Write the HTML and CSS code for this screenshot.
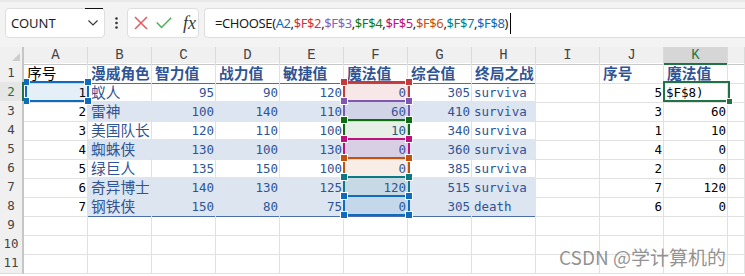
FILE: index.html
```html
<!DOCTYPE html>
<html lang="zh-CN">
<head>
  <meta charset="UTF-8">
  <title>CHOOSE</title>
  <link rel="stylesheet" href="styles.css">
</head>
<body>
  <!-- barra de fórmulas -->
  <div class="toolbar">
    <div class="namebox">
      <span>COUNT</span>
      <svg class="chev" width="10" height="6" viewBox="0 0 10 6"><polyline points="0.5,0.5 5,5 9.5,0.5" fill="none" stroke="#333" stroke-width="1.1"/></svg>
    </div>
    <div class="dots">
      <svg width="3" height="12" viewBox="0 0 3 12"><circle cx="1.5" cy="1.5" r="1.3" fill="#333"/><circle cx="1.5" cy="6" r="1.3" fill="#333"/><circle cx="1.5" cy="10.5" r="1.3" fill="#333"/></svg>
    </div>
    <div class="fxbox">
      <svg width="14" height="14" viewBox="0 0 14 14"><path d="M1 1 L13 13 M13 1 L1 13" stroke="#e8585c" stroke-width="1.5" fill="none"/></svg>
      <svg width="16" height="12" viewBox="0 0 16 12"><polyline points="0.8,5.5 5.5,10.5 15.2,0.8" stroke="#4caf58" stroke-width="1.5" fill="none"/></svg>
      <span class="fx">fx</span>
    </div>
    <div class="formula">
      <span>=CHOOSE(<b class="r1">A2</b>,<b class="r2">$F$2</b>,<b class="r3">$F$3</b>,<b class="r4">$F$4</b>,<b class="r5">$F$5</b>,<b class="r6">$F$6</b>,<b class="r7">$F$7</b>,<b class="r8">$F$8</b>)</span><span class="caret"></span>
    </div>
  </div>

  <!-- planilha -->
  <div class="sheet">
    <div class="row head">
      <div class="corner"></div>
      <div class="ch">A</div><div class="ch">B</div><div class="ch">C</div><div class="ch">D</div>
      <div class="ch">E</div><div class="ch">F</div><div class="ch">G</div><div class="ch">H</div>
      <div class="ch">I</div><div class="ch">J</div><div class="ch sel">K</div><div class="ch"></div>
    </div>
    <div class="row">
      <div class="rh">1</div>
      <div class="c">序号</div>
      <div class="c t hd">漫威角色</div><div class="c t hd">智力值</div><div class="c t hd">战力值</div>
      <div class="c t hd">敏捷值</div><div class="c t hd">魔法值</div><div class="c t hd">综合值</div>
      <div class="c t hd">终局之战</div>
      <div class="c"></div>
      <div class="c hd2">序号</div><div class="c hd2">魔法值</div><div class="c"></div>
    </div>
    <div class="row">
      <div class="rh sel">2</div>
      <div class="c n">1</div>
      <div class="c t">蚁人</div><div class="c t n">95</div><div class="c t n">90</div>
      <div class="c t n">120</div><div class="c t n">0</div><div class="c t n">305</div>
      <div class="c t m">surviva</div>
      <div class="c"></div>
      <div class="c n">5</div><div class="c m">$F$8)</div><div class="c"></div>
    </div>
    <div class="row">
      <div class="rh">3</div>
      <div class="c n">2</div>
      <div class="c t b">雷神</div><div class="c t b n">100</div><div class="c t b n">140</div>
      <div class="c t b n">110</div><div class="c t b n">60</div><div class="c t b n">410</div>
      <div class="c t b m">surviva</div>
      <div class="c"></div>
      <div class="c n">3</div><div class="c n">60</div><div class="c"></div>
    </div>
    <div class="row">
      <div class="rh">4</div>
      <div class="c n">3</div>
      <div class="c t">美国队长</div><div class="c t n">120</div><div class="c t n">110</div>
      <div class="c t n">100</div><div class="c t n">10</div><div class="c t n">340</div>
      <div class="c t m">surviva</div>
      <div class="c"></div>
      <div class="c n">1</div><div class="c n">10</div><div class="c"></div>
    </div>
    <div class="row">
      <div class="rh">5</div>
      <div class="c n">4</div>
      <div class="c t b">蜘蛛侠</div><div class="c t b n">130</div><div class="c t b n">100</div>
      <div class="c t b n">130</div><div class="c t b n">0</div><div class="c t b n">360</div>
      <div class="c t b m">surviva</div>
      <div class="c"></div>
      <div class="c n">4</div><div class="c n">0</div><div class="c"></div>
    </div>
    <div class="row">
      <div class="rh">6</div>
      <div class="c n">5</div>
      <div class="c t">绿巨人</div><div class="c t n">135</div><div class="c t n">150</div>
      <div class="c t n">100</div><div class="c t n">0</div><div class="c t n">385</div>
      <div class="c t m">surviva</div>
      <div class="c"></div>
      <div class="c n">2</div><div class="c n">0</div><div class="c"></div>
    </div>
    <div class="row">
      <div class="rh">7</div>
      <div class="c n">6</div>
      <div class="c t b">奇异博士</div><div class="c t b n">140</div><div class="c t b n">130</div>
      <div class="c t b n">125</div><div class="c t b n">120</div><div class="c t b n">515</div>
      <div class="c t b m">surviva</div>
      <div class="c"></div>
      <div class="c n">7</div><div class="c n">120</div><div class="c"></div>
    </div>
    <div class="row">
      <div class="rh">8</div>
      <div class="c n">7</div>
      <div class="c t b end">钢铁侠</div><div class="c t b end n">150</div><div class="c t b end n">80</div>
      <div class="c t b end n">75</div><div class="c t b end n">0</div><div class="c t b end n">305</div>
      <div class="c t b end m">death</div>
      <div class="c"></div>
      <div class="c n">6</div><div class="c n">0</div><div class="c"></div>
    </div>
    <div class="row">
      <div class="rh">9</div>
      <div class="c"></div><div class="c"></div><div class="c"></div><div class="c"></div><div class="c"></div><div class="c"></div>
      <div class="c"></div><div class="c"></div><div class="c"></div><div class="c"></div><div class="c"></div><div class="c"></div>
    </div>
    <div class="row">
      <div class="rh">10</div>
      <div class="c"></div><div class="c"></div><div class="c"></div><div class="c"></div><div class="c"></div><div class="c"></div>
      <div class="c"></div><div class="c"></div><div class="c"></div><div class="c"></div><div class="c"></div><div class="c"></div>
    </div>
    <div class="row">
      <div class="rh">11</div>
      <div class="c"></div><div class="c"></div><div class="c"></div><div class="c"></div><div class="c"></div><div class="c"></div>
      <div class="c"></div><div class="c"></div><div class="c"></div><div class="c"></div><div class="c"></div><div class="c"></div>
    </div>

    <!-- referências da fórmula -->
    <div class="ref ref-a2 c-blue"></div>
    <div class="ref ref-f f2 c-red"></div>
    <div class="ref ref-f f3 c-purple"></div>
    <div class="ref ref-f f4 c-green"></div>
    <div class="ref ref-f f5 c-magenta"></div>
    <div class="ref ref-f f6 c-orange"></div>
    <div class="ref ref-f f7 c-teal"></div>
    <div class="ref ref-f f8 c-blue"></div>
    <div class="active"></div>
  </div>

  <div class="watermark">CSDN @学计算机的</div>
</body>
</html>
```

FILE: styles.css
```css
/* Página */
body {
  margin: 0;
  width: 745px;
  height: 276px;
  overflow: hidden;
  position: relative;
  background-color: #fff;
  font-family: "Noto Sans", "Noto Sans CJK SC", sans-serif;
}

/* Barra de fórmulas */
.toolbar {
  height: 47px;
  box-sizing: border-box;
  padding: 6px 0 0 5px;
  display: flex;
  align-items: flex-start;
  background-color: #f3f3f3;
  border-top: 2px solid #e9e9e9;
}

.namebox {
  position: relative;
  width: 100px;
  height: 30px;
  box-sizing: border-box;
  display: flex;
  align-items: center;
  padding-left: 5px;
  background-color: #fff;
  border: 1px solid #dedede;
  border-radius: 4px;
  font-size: 13px;
  color: #1e1e1e;
}

.namebox::after {
  content: '';
  position: absolute;
  right: 1px;
  top: -1px;
  width: 18px;
  height: 1px;
  background-color: #111;
}

.chev {
  margin-left: auto;
  margin-right: 6px;
}

.dots {
  width: 22px;
  height: 30px;
  display: flex;
  align-items: center;
  justify-content: center;
}

.fxbox {
  width: 72px;
  height: 30px;
  box-sizing: border-box;
  display: flex;
  align-items: center;
  padding-left: 6px;
  gap: 8px;
  background-color: #fff;
  border: 1px solid #dedede;
  border-radius: 4px;
}

.fx {
  font-family: "Liberation Serif", serif;
  font-style: italic;
  font-size: 18px;
  color: #3a3a3a;
  margin-left: 3px;
  line-height: 1;
}

.formula {
  flex: 1;
  margin-left: 5px;
  height: 30px;
  box-sizing: border-box;
  display: flex;
  align-items: center;
  padding-left: 10px;
  background-color: #fff;
  border: 1px solid #dedede;
  border-right: none;
  border-radius: 4px 0 0 4px;
  font-size: 13px;
  letter-spacing: -0.4px;
  color: #1b1b1b;
}

.formula b { font-weight: normal; }
.r1, .r8 { color: #0f6cbd; }
.r2 { color: #d13438; }
.r3 { color: #8764b8; }
.r4 { color: #107c10; }
.r5 { color: #c30c82; }
.r6 { color: #ca5010; }
.r7 { color: #038387; }

.caret {
  width: 1px;
  height: 21px;
  margin-left: 2px;
  background-color: #000;
}

/* Planilha */
.sheet {
  position: relative;
}

.row {
  display: grid;
  grid-template-columns: 24px repeat(11, 64px) 1fr;
  height: 19px;
}

.row.head {
  height: 16px;
  background-color: #f0f0f0;
}

.corner {
  position: relative;
  border-right: 2px solid #c6c6c6;
  border-bottom: 1px solid #c8c8c8;
}

.corner::after {
  content: '';
  position: absolute;
  right: 2px;
  bottom: 3px;
  border-left: 8px solid transparent;
  border-bottom: 8px solid #cdcdcd;
}

.ch {
  border-right: 1px solid #dadada;
  border-bottom: 1px solid #c8c8c8;
  text-align: center;
  font-family: "Liberation Mono", monospace;
  font-size: 14px;
  line-height: 16px;
  color: #444;
}

.ch.sel {
  background-color: #d6d6d6;
  color: #217346;
  border-bottom: 2px solid #217346;
}

.rh {
  position: relative;
  z-index: 2;
  background-color: #f0f0f0;
  border-right: 2px solid #c6c6c6;
  border-bottom: 1px solid #dcdcdc;
  text-align: center;
  font-family: "DejaVu Sans Mono", monospace;
  font-size: 12.5px;
  line-height: 20px;
  color: #444;
}

.rh.sel {
  color: #217346;
  background-color: #e6e6e6;
  border-right-color: #217346;
}

/* Células */
.c {
  box-sizing: border-box;
  border-right: 1px solid #e1e1e1;
  border-bottom: 1px solid #e1e1e1;
  padding: 0 1px 0 3px;
  overflow: hidden;
  white-space: nowrap;
  font-family: "Noto Sans CJK SC", sans-serif;
  font-size: 14.7px;
  line-height: 20px;
  color: #000;
}

.n {
  text-align: right;
  font-family: "DejaVu Sans Mono", monospace;
  font-size: 12.5px;
  line-height: 21px;
}

.m {
  padding-left: 2px;
  font-family: "DejaVu Sans Mono", monospace;
  font-size: 12.5px;
  line-height: 21px;
}

/* Tabela formatada */
.t {
  color: #2f5496;
  border-bottom-color: #dce5f0;
}

.b {
  background-color: #dce5f0;
  border-right-color: #dce5f0;
}

.hd,
.hd2 {
  font-weight: bold;
  color: #2f5496;
}

.hd,
.end {
  border-bottom-color: #4a6fa8;
}

/* Referências coloridas */
.ref {
  position: absolute;
  z-index: 3;
  box-sizing: border-box;
  height: 21px;
  border: 2px solid var(--c);
  background-color: var(--f);
}

.ref::before {
  content: '';
  position: absolute;
  left: -5px;
  top: -5px;
  right: -5px;
  bottom: -5px;
  background:
    linear-gradient(var(--c), var(--c)) left 1px top 1px / 6px 6px no-repeat,
    linear-gradient(var(--c), var(--c)) right 1px top 1px / 6px 6px no-repeat,
    linear-gradient(var(--c), var(--c)) left 1px bottom 1px / 6px 6px no-repeat,
    linear-gradient(var(--c), var(--c)) right 1px bottom 1px / 6px 6px no-repeat,
    linear-gradient(#fff, #fff) left top / 8px 8px no-repeat,
    linear-gradient(#fff, #fff) right top / 8px 8px no-repeat,
    linear-gradient(#fff, #fff) left bottom / 8px 8px no-repeat,
    linear-gradient(#fff, #fff) right bottom / 8px 8px no-repeat;
}

.ref-a2 { left: 25px; top: 34px; width: 64px; z-index: 1; }
.ref-f { left: 343px; width: 67px; }
.f2 { top: 34px; }
.f3 { top: 53px; }
.f4 { top: 72px; }
.f5 { top: 91px; }
.f6 { top: 110px; }
.f7 { top: 129px; }
.f8 { top: 148px; }

.c-blue { --c: #0f6cbd; --f: rgba(15, 108, 189, 0.11); }
.c-red { --c: #c53a3a; --f: rgba(197, 58, 58, 0.12); }
.c-purple { --c: #8057b0; --f: rgba(128, 87, 176, 0.12); }
.c-green { --c: #0e6e13; --f: rgba(14, 110, 19, 0.1); }
.c-magenta { --c: #c0127f; --f: rgba(192, 18, 127, 0.1); }
.c-orange { --c: #c2520f; --f: rgba(194, 82, 15, 0.1); }
.c-teal { --c: #0b7a85; --f: rgba(11, 122, 133, 0.1); }

/* Célula ativa */
.active {
  position: absolute;
  z-index: 3;
  left: 663px;
  top: 34px;
  width: 67px;
  height: 21px;
  box-sizing: border-box;
  border: 2px solid #217346;
}

.active::after {
  content: '';
  position: absolute;
  right: -5px;
  bottom: -5px;
  width: 5px;
  height: 5px;
  background-color: #217346;
  border: 1px solid #fff;
}

/* Marca d'água */
.watermark {
  position: absolute;
  left: 559px;
  top: 243px;
  font-family: "Noto Sans CJK SC", sans-serif;
  font-size: 19px;
  color: rgba(110, 110, 110, 0.75);
  white-space: nowrap;
}
```
